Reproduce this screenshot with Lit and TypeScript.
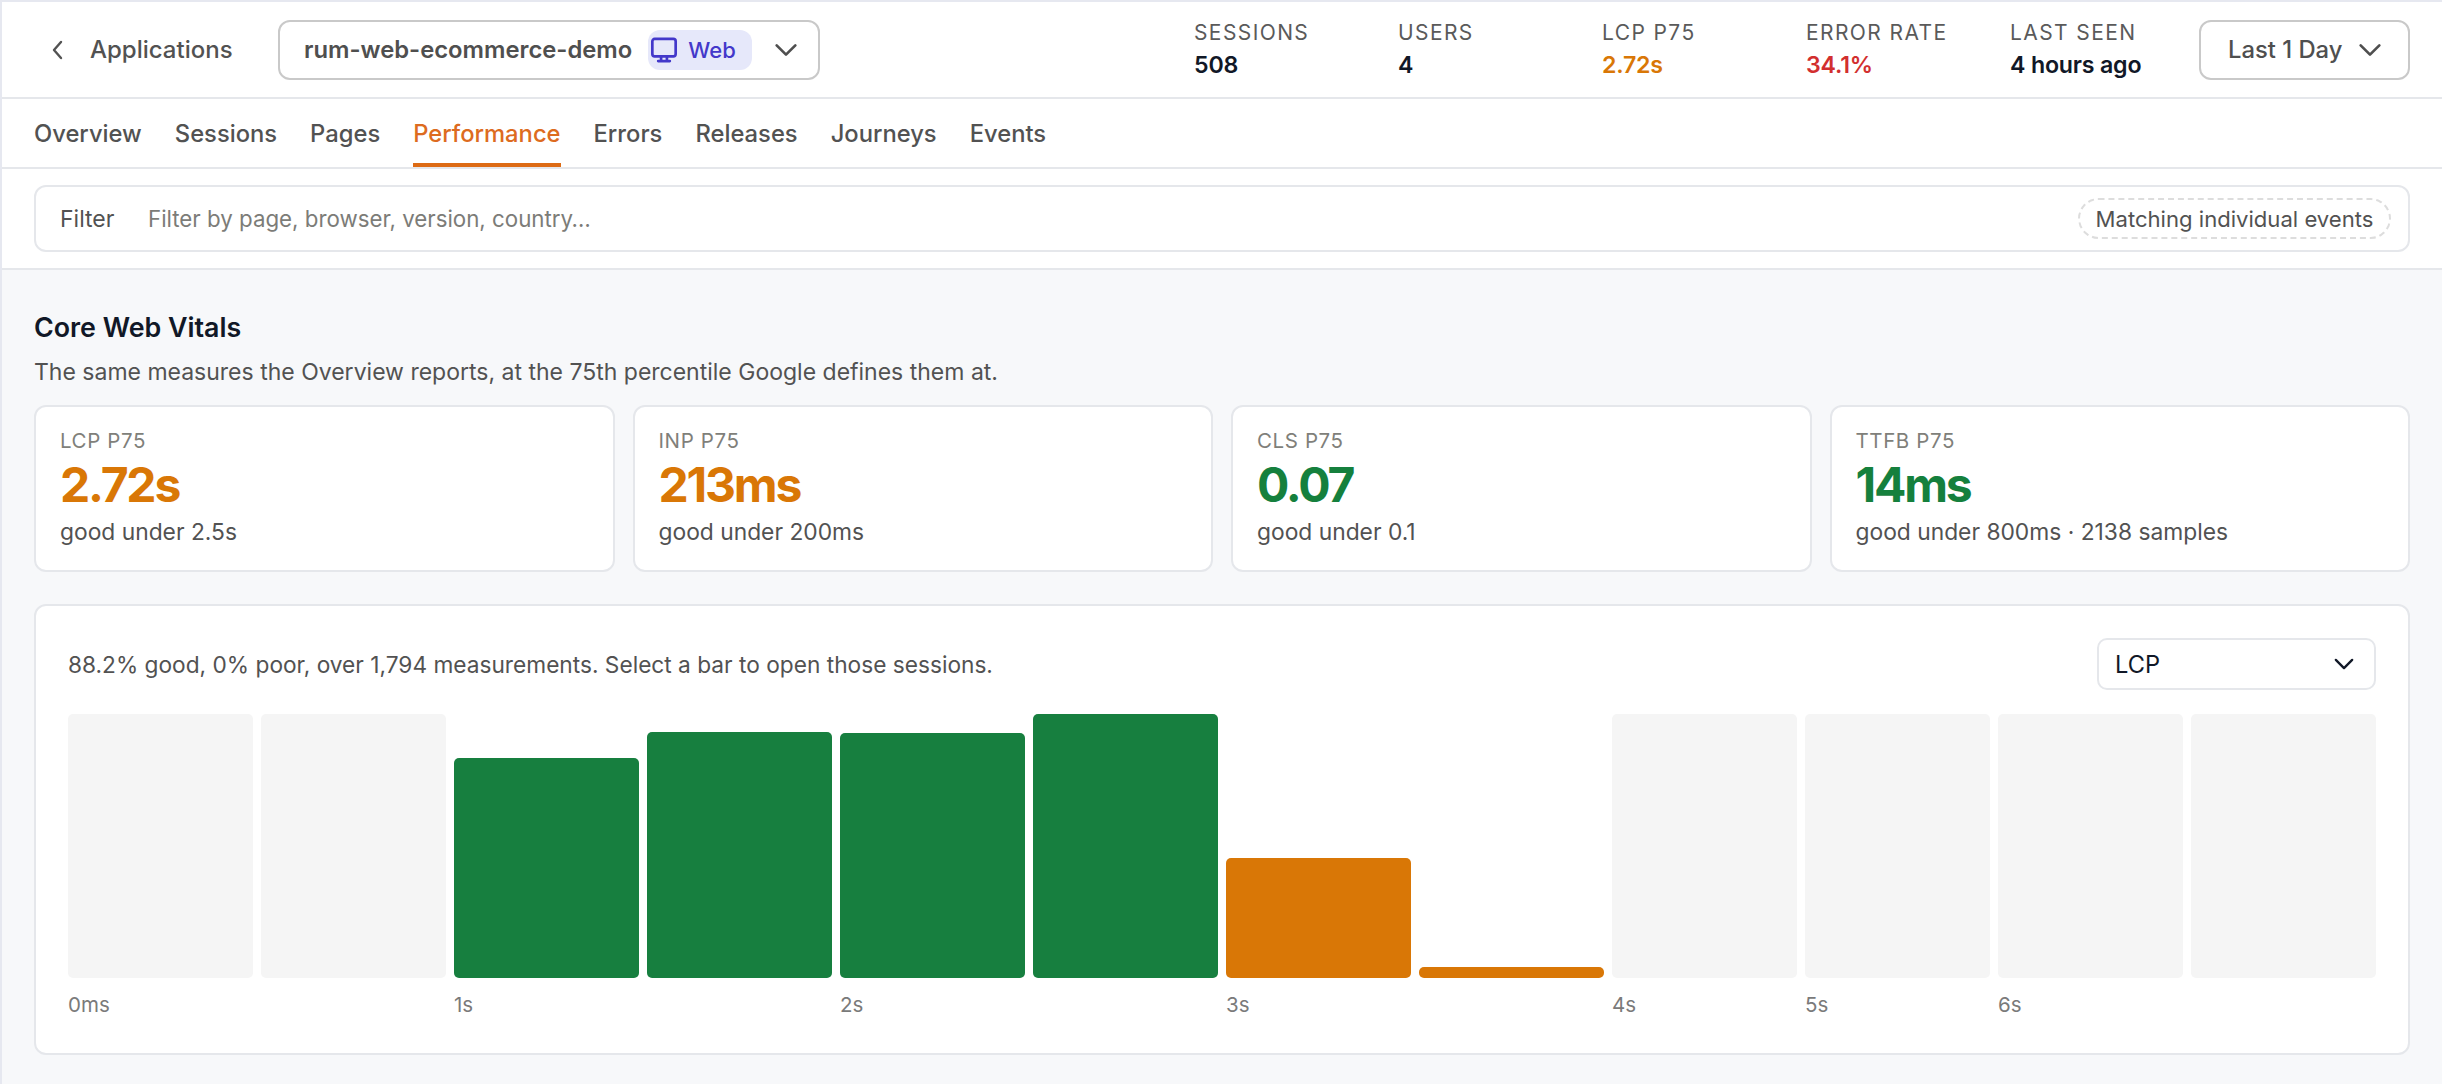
import { LitElement, html, css, svg } from "lit";
import { customElement } from "lit/decorators.js";

const chevronDown = svg`<path d="M5 8.5l7 7 7-7" fill="none" stroke="currentColor" stroke-width="2" stroke-linecap="round" stroke-linejoin="round"/>`;

const STATS = [
  { label: "SESSIONS", value: "508", tone: "" },
  { label: "USERS", value: "4", tone: "" },
  { label: "LCP P75", value: "2.72s", tone: "warn" },
  { label: "ERROR RATE", value: "34.1%", tone: "bad" },
  { label: "LAST SEEN", value: "4 hours ago", tone: "" },
];

const TABS = ["Overview", "Sessions", "Pages", "Performance", "Errors", "Releases", "Journeys", "Events"];

const VITALS = [
  { label: "LCP P75", value: "2.72s", tone: "warn", note: "good under 2.5s" },
  { label: "INP P75", value: "213ms", tone: "warn", note: "good under 200ms" },
  { label: "CLS P75", value: "0.07", tone: "good", note: "good under 0.1" },
  { label: "TTFB P75", value: "14ms", tone: "good", note: "good under 800ms · 2138 samples" },
];

// height in px, tone decides the fill; empty buckets are full-height grey
const BARS = [
  { h: 264, tone: "empty", tick: "0ms" },
  { h: 264, tone: "empty", tick: "" },
  { h: 220, tone: "good", tick: "1s" },
  { h: 246, tone: "good", tick: "" },
  { h: 245, tone: "good", tick: "2s" },
  { h: 264, tone: "good", tick: "" },
  { h: 120, tone: "warn", tick: "3s" },
  { h: 11, tone: "warn", tick: "" },
  { h: 264, tone: "empty", tick: "4s" },
  { h: 264, tone: "empty", tick: "5s" },
  { h: 264, tone: "empty", tick: "6s" },
  { h: 264, tone: "empty", tick: "" },
];

@customElement("app-root")
export class AppRoot extends LitElement {
  static styles = css`
    :host {
      display: block;
      height: 1084px;
      box-sizing: border-box;
      overflow: hidden;
      background: #f7f8fa;
      border-top: 2px solid #e6e8f0;
      border-left: 2px solid #e6e8f0;
      font-family: Inter, "Liberation Sans", sans-serif;
      color: #4f4f4f;
    }
    * { box-sizing: border-box; }
    svg { display: block; flex: none; }

    .top {
      height: 97px;
      display: flex;
      align-items: center;
      background: #fff;
      border-bottom: 2px solid #e5e7eb;
      padding: 0 32px 0 44px;
    }
    .back {
      display: flex;
      align-items: center;
      gap: 20px;
      font-size: 24px;
      font-weight: 500;
      color: #525252;
      width: 232px;
    }
    .picker {
      width: 542px;
      height: 60px;
      display: flex;
      align-items: center;
      padding: 0 24px;
      border: 2px solid #c9c9c9;
      border-radius: 12px;
      font-size: 23.8px;
      font-weight: 600;
      color: #4f4f4f;
    }
    .badge {
      display: flex;
      align-items: center;
      gap: 10px;
      height: 40px;
      margin-left: 16px;
      padding: 0 16px 0 2px;
      border-radius: 12px;
      background: #e6e8fa;
      color: #4338ca;
      font-size: 22px;
      font-weight: 550;
    }
    .picker .caret { margin-left: auto; margin-right: -8px; color: #4f4f4f; }
    .stats {
      display: flex;
      margin-left: auto;
    }
    .stat { width: 204px; }
    .stat:last-child { width: 189px; }
    .stat .k {
      font-size: 21px;
      line-height: 24px;
      letter-spacing: 1.4px;
      color: #5a5a5a;
    }
    .stat .v {
      margin-top: 7px;
      font-size: 23.2px;
      line-height: 26px;
      font-weight: 600;
      letter-spacing: -0.2px;
      color: #111827;
    }
    .warn { color: #d97706 !important; }
    .bad { color: #d22f2f !important; }
    .good { color: #15803d !important; }
    .range {
      width: 211px;
      height: 60px;
      display: flex;
      align-items: center;
      gap: 12px;
      padding-left: 27px;
      border: 2px solid #c9c9c9;
      border-radius: 12px;
      font-size: 23.8px;
      font-weight: 500;
      color: #4f4f4f;
    }

    .tabs {
      height: 70px;
      display: flex;
      gap: 33px;
      padding: 0 32px;
      background: #fff;
      border-bottom: 2px solid #e5e7eb;
    }
    .tab {
      display: flex;
      align-items: center;
      height: 68px;
      font-size: 23.75px;
      font-weight: 550;
      color: #525252;
      border-bottom: 4px solid transparent;
      border-top: 4px solid transparent;
    }
    .tab.on {
      color: #dd6b20;
      border-bottom-color: #dd6b14;
    }

    .filter-wrap {
      padding: 16px 32px;
      background: #fff;
      border-bottom: 2px solid #e5e7eb;
    }
    .filter {
      height: 67px;
      display: flex;
      align-items: center;
      padding: 0 17px 0 24px;
      border: 2px solid #e5e7eb;
      border-radius: 12px;
      font-size: 22.3px;
    }
    .filter .name { width: 88px; font-size: 23px; color: #525252; }
    .filter .hint { color: #7c7c78; }
    .pill {
      margin-left: auto;
      width: 313px;
      height: 41px;
      display: flex;
      align-items: center;
      justify-content: center;
      border: 2px dashed #dddddd;
      border-radius: 21px;
      font-size: 22.1px;
      color: #525252;
    }

    .body { padding: 42px 32px 0; }
    h2 {
      margin: 0;
      font-size: 26.8px;
      line-height: 30px;
      font-weight: 600;
      color: #111827;
    }
    .sub {
      margin-top: 15px;
      font-size: 23px;
      line-height: 30px;
      color: #525252;
    }
    .cards {
      margin-top: 18px;
      display: grid;
      grid-template-columns: repeat(4, 1fr);
      gap: 18px;
    }
    .card {
      height: 167px;
      padding: 22px 24px;
      background: #fff;
      border: 2px solid #e5e7eb;
      border-radius: 12px;
    }
    .card .k {
      font-size: 20.5px;
      line-height: 24px;
      letter-spacing: 0.6px;
      color: #807f7a;
    }
    .card .v {
      margin-top: 3px;
      font-size: 48px;
      line-height: 58px;
      font-weight: 700;
      letter-spacing: -2.2px;
    }
    .card .n {
      margin-top: 3px;
      font-size: 22.8px;
      line-height: 30px;
      color: #525252;
    }

    .panel {
      margin-top: 32px;
      height: 451px;
      padding: 32px 32px 0;
      background: #fff;
      border: 2px solid #e5e7eb;
      border-radius: 12px;
    }
    .panel-head {
      height: 52px;
      display: flex;
      align-items: center;
      justify-content: space-between;
      font-size: 22.7px;
      color: #525252;
    }
    .select {
      width: 279px;
      height: 52px;
      display: flex;
      align-items: center;
      justify-content: space-between;
      padding: 0 16px;
      border: 2px solid #e5e7eb;
      border-radius: 10px;
      font-size: 23.6px;
      color: #111827;
    }
    .bars {
      margin-top: 24px;
      display: grid;
      grid-template-columns: repeat(12, 1fr);
      column-gap: 8px;
    }
    .col { display: flex; flex-direction: column; }
    .slot {
      height: 264px;
      display: flex;
      align-items: flex-end;
    }
    .bar { width: 100%; border-radius: 5px; }
    .bar.t-good { background: #177f3f; }
    .bar.t-warn { background: #d97706; }
    .bar.t-empty { background: #f5f5f5; }
    .tick {
      margin-top: 13px;
      height: 28px;
      font-size: 20.5px;
      line-height: 28px;
      color: #7a7a7a;
    }
  `;

  render() {
    return html`
      <div class="top">
        <div class="back">
          <svg width="24" height="28" viewBox="0 0 24 28"><path d="M15 6l-7 8 7 8" fill="none" stroke="currentColor" stroke-width="2.4" stroke-linecap="round" stroke-linejoin="round"/></svg>
          Applications
        </div>
        <div class="picker">
          rum-web-ecommerce-demo
          <span class="badge">
            <svg width="28" height="28" viewBox="0 0 24 24" fill="none" stroke="currentColor" stroke-width="2.3" stroke-linecap="round" stroke-linejoin="round"><rect x="2" y="2.5" width="20" height="15" rx="2"/><path d="M9.5 17.5v4M14.5 17.5v4M7 21.5h10"/></svg>
            Web
          </span>
          <svg class="caret" width="32" height="32" viewBox="0 0 24 24">${chevronDown}</svg>
        </div>
        <div class="stats">
          ${STATS.map(
            (s) => html`<div class="stat"><div class="k">${s.label}</div><div class="v ${s.tone}">${s.value}</div></div>`
          )}
        </div>
        <div class="range">
          Last 1 Day
          <svg width="32" height="32" viewBox="0 0 24 24">${chevronDown}</svg>
        </div>
      </div>
      <div class="tabs">
        ${TABS.map((t) => html`<div class="tab ${t === "Performance" ? "on" : ""}">${t}</div>`)}
      </div>
      <div class="filter-wrap">
        <div class="filter">
          <span class="name">Filter</span>
          <span class="hint">Filter by page, browser, version, country…</span>
          <span class="pill">Matching individual events</span>
        </div>
      </div>
      <div class="body">
        <h2>Core Web Vitals</h2>
        <div class="sub">The same measures the Overview reports, at the 75th percentile Google defines them at.</div>
        <div class="cards">
          ${VITALS.map(
            (c) => html`<div class="card">
              <div class="k">${c.label}</div>
              <div class="v ${c.tone}">${c.value}</div>
              <div class="n">${c.note}</div>
            </div>`
          )}
        </div>
        <div class="panel">
          <div class="panel-head">
            <span>88.2% good, 0% poor, over 1,794 measurements. Select a bar to open those sessions.</span>
            <div class="select">
              LCP
              <svg width="28" height="28" viewBox="0 0 24 24">${chevronDown}</svg>
            </div>
          </div>
          <div class="bars">
            ${BARS.map(
              (b) => html`<div class="col">
                <div class="slot"><div class="bar t-${b.tone}" style="height:${b.h}px"></div></div>
                <div class="tick">${b.tick}</div>
              </div>`
            )}
          </div>
        </div>
      </div>
    `;
  }
}
